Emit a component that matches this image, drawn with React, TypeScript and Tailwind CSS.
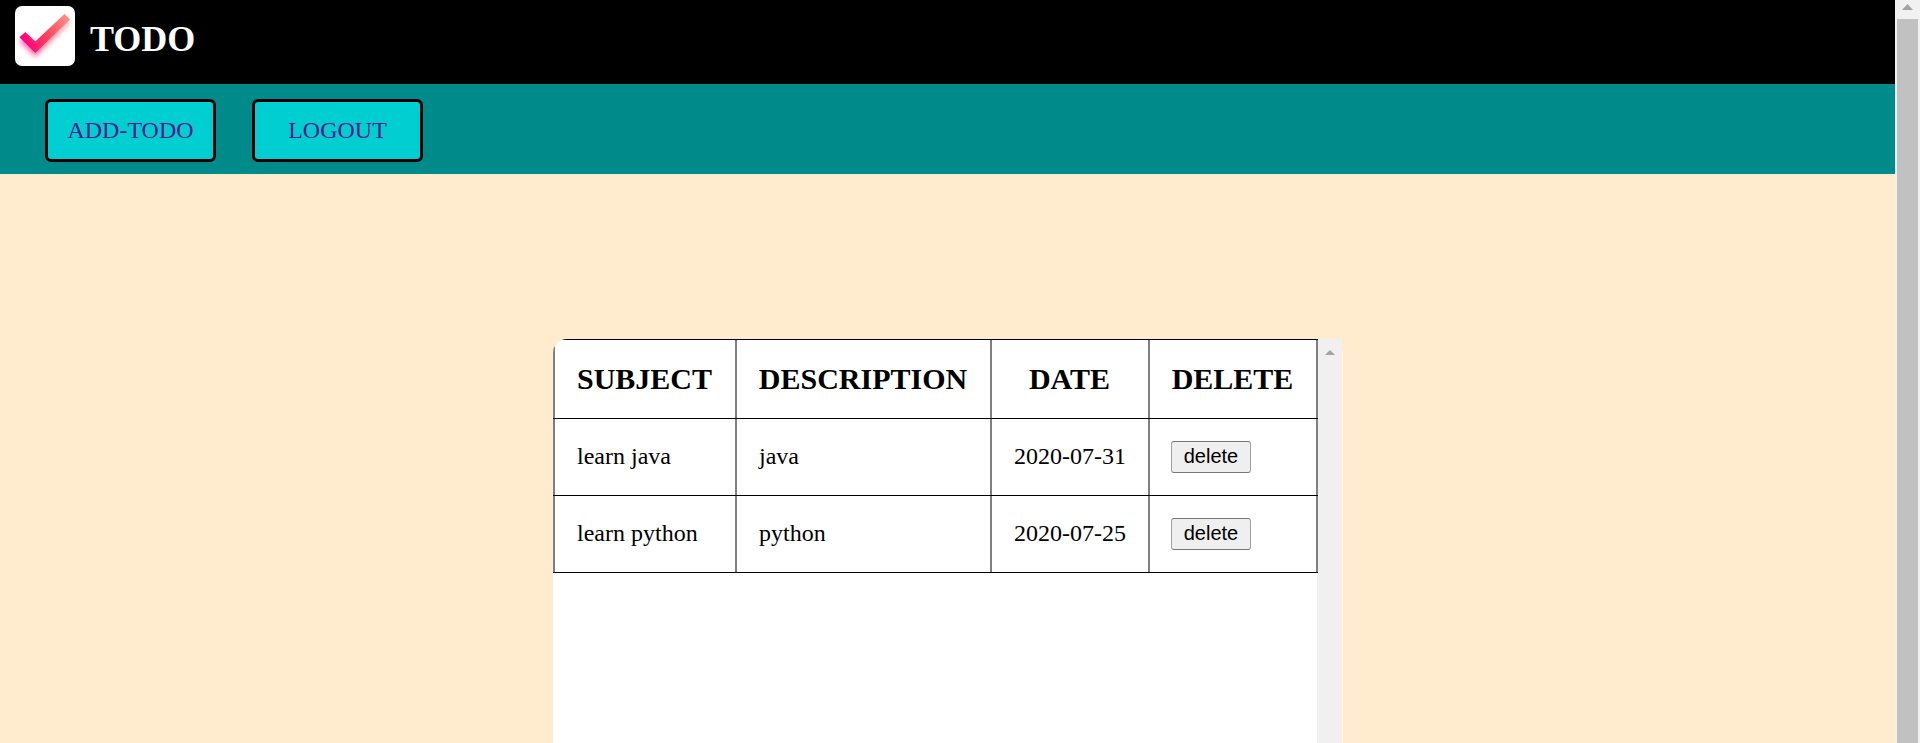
const columns = [
  { title: 'SUBJECT', width: 'w-[184px] border-l-2' },
  { title: 'DESCRIPTION', width: 'w-[255px]' },
  { title: 'DATE', width: 'w-[158px]' },
  { title: 'DELETE', width: 'w-[168px]' },
];

const todos = [
  { subject: 'learn java', description: 'java', date: '2020-07-31' },
  { subject: 'learn python', description: 'python', date: '2020-07-25' },
];

const cell = 'flex shrink-0 items-center border-r-2 border-[#808080]';

function Logo() {
  return (
    <svg className="size-[60px] shrink-0 rounded-[7px] bg-white" viewBox="0 0 60 60">
      <defs>
        <linearGradient id="tick" gradientUnits="userSpaceOnUse" x1="8" y1="36" x2="54" y2="14">
          <stop offset="0" stopColor="#ff0080" />
          <stop offset="0.45" stopColor="#ff3f5e" />
          <stop offset="1" stopColor="#ff8f85" />
        </linearGradient>
        <filter id="glow" x="-30%" y="-30%" width="160%" height="170%">
          <feGaussianBlur stdDeviation="2.8" />
        </filter>
      </defs>
      <path d="M4.5 31.3 L10.3 26 L20.3 35.5 L49.5 8 L55 13.4 L20.3 47 Z" transform="translate(0 4)" fill="url(#tick)" opacity="0.6" filter="url(#glow)" />
      <path d="M4.5 31.3 L10.3 26 L20.3 35.5 L49.5 8 L55 13.4 L20.3 47 Z" fill="url(#tick)" />
    </svg>
  );
}

function NavButton({ label }: { label: string }) {
  return (
    <a className="flex h-[63px] w-[171px] items-center justify-center rounded-[6px] border-3 border-black bg-[#00ced1] pb-px text-[24px] leading-none text-[#551a8b]">
      {label}
    </a>
  );
}

export default function App() {
  return (
    <div className="flex h-[743px] w-[1920px] overflow-hidden bg-[#ffebcd] font-['Liberation_Serif',serif] text-black">
      <div className="flex w-[1895px] flex-col">
        <header className="flex h-[84px] shrink-0 items-start gap-[15px] bg-black pt-[6px] pl-[15px]">
          <Logo />
          <h1 className="pt-[13px] text-[36px] leading-[41px] font-bold text-white">TODO</h1>
        </header>
        <nav className="flex h-[90px] shrink-0 gap-[36px] bg-[#008b8b] pt-[15px] pl-[45px]">
          <NavButton label="ADD-TODO" />
          <NavButton label="LOGOUT" />
        </nav>
        <main className="mt-[165px] ml-[553px] flex h-[404px] w-[790px]">
          <div className="z-10 w-[764px] shrink-0 rounded-tl-[14px] bg-white">
            <div className="w-[765px] overflow-hidden rounded-tl-[14px]">
              <div className="flex h-[80px] border-y border-black">
                {columns.map((c) => (
                  <div key={c.title} className={`${cell} ${c.width} justify-center pr-px pb-[2px] text-[30px] font-bold`}>
                    {c.title}
                  </div>
                ))}
              </div>
              {todos.map((t) => (
                <div key={t.subject} className="flex h-[77px] border-b border-black text-[24px]">
                  <div className={`${cell} ${columns[0].width} pb-[2px] pl-[22px]`}>{t.subject}</div>
                  <div className={`${cell} ${columns[1].width} pb-[2px] pl-[22px]`}>{t.description}</div>
                  <div className={`${cell} ${columns[2].width} pb-[2px] pl-[22px]`}>{t.date}</div>
                  <div className={`${cell} ${columns[3].width} pl-[21px]`}>
                    <button className="flex h-[32px] w-[80px] items-center justify-center rounded-[3px] border border-x-[#a0a0a0] border-y-[#767676] bg-[#efefef] pb-[2px] font-['Liberation_Sans',sans-serif] text-[20px] leading-none">
                      delete
                    </button>
                  </div>
                </div>
              ))}
            </div>
          </div>
          <div className="flex w-[25px] justify-center bg-[#f0f0f0] pt-[11px]">
            <svg className="h-[5px] w-[10px]" viewBox="0 0 10 5">
              <path d="M5 0 L10 5 H0 Z" fill="#a3a3a3" />
            </svg>
          </div>
          <div className="mt-[12px] w-px bg-[#fff5e6]" />
        </main>
      </div>
      <div className="flex w-[25px] flex-col items-center bg-[#f1f1f1]">
        <svg className="mt-[4px] h-[6px] w-[11px] shrink-0" viewBox="0 0 11 6">
          <path d="M5.5 0 L11 6 H0 Z" fill="#a3a3a3" />
        </svg>
        <div className="mt-[9px] mr-px w-[21px] grow bg-[#c1c1c1]" />
      </div>
    </div>
  );
}
